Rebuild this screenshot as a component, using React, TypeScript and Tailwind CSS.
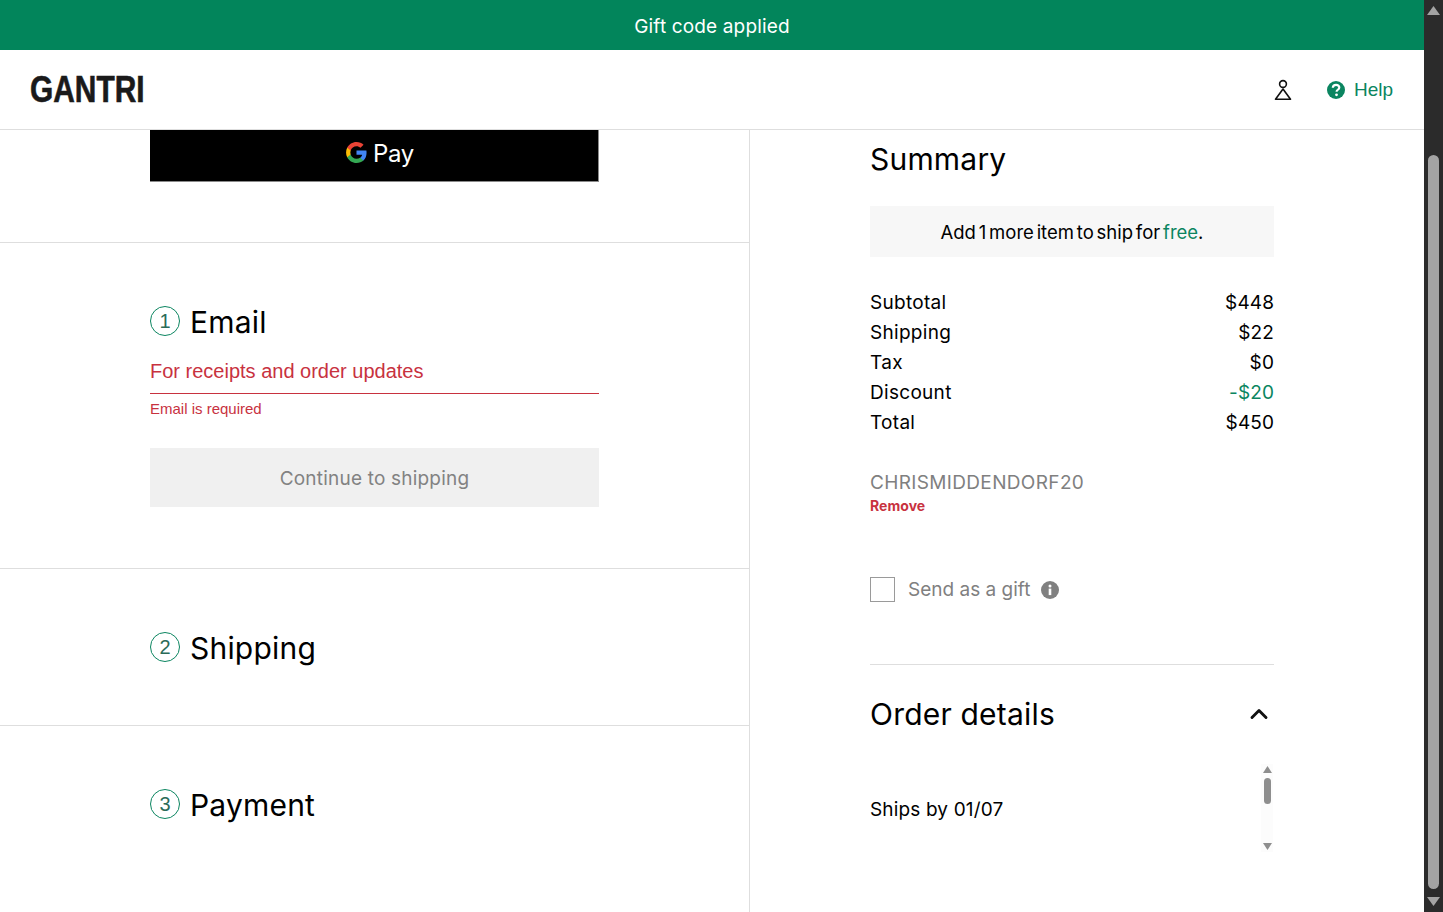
import { ChevronUp } from "lucide-react";

const FONT = "font-['Inter','Liberation_Sans',sans-serif]";

function Step({ n, label }: { n: number; label: string }) {
  return (
    <div className="flex items-center gap-[10px]">
      <span className="flex h-[30px] w-[30px] items-center justify-center rounded-full border border-[#0b8560] font-['Liberation_Sans',sans-serif] text-[20px] text-[#2b6b58]">
        {n}
      </span>
      <h2 className="h-[36px] pt-[2px] text-[30px] leading-[34px] tracking-[0.2px] text-black">{label}</h2>
    </div>
  );
}

function GoogleG() {
  return (
    <svg width="23" height="23" viewBox="0 0 48 48">
      <path fill="#4285F4" d="M45 24.5c0-1.6-.1-3.1-.4-4.5H24v8.6h11.8c-.5 2.8-2.1 5.1-4.4 6.7v5.6h7.1C42.7 37 45 31.3 45 24.5z" />
      <path fill="#34A853" d="M24 46c5.9 0 10.9-2 14.5-5.3l-7.1-5.6c-2 1.3-4.5 2.1-7.4 2.1-5.7 0-10.5-3.8-12.2-9H4.5v5.8C8.1 41 15.5 46 24 46z" />
      <path fill="#FBBC05" d="M11.8 28.2c-.9-2.6-.9-5.8 0-8.4V14H4.5c-3 6-3 14 0 20l7.3-5.8z" />
      <path fill="#EA4335" d="M24 10.8c3.2 0 6.1 1.1 8.4 3.3l6.3-6.3C34.9 4.2 29.9 2 24 2 15.5 2 8.1 7 4.5 14l7.3 5.8c1.7-5.2 6.5-9 12.2-9z" />
    </svg>
  );
}

function Row({ label, value, green }: { label: string; value: string; green?: boolean }) {
  return (
    <div className="flex h-[30px] items-center justify-between pt-[2px] text-[19px] text-black">
      <span className="tracking-[0.3px]">{label}</span>
      <span className={green ? "tracking-[0.1px] text-[#0b8560]" : "tracking-[0.1px]"}>{value}</span>
    </div>
  );
}

function Scrollbar() {
  return (
    <div className="flex h-full w-[19px] shrink-0 flex-col items-center bg-[#2b2b2b]">
      <svg width="13" height="10" viewBox="0 0 13 10" className="mt-[6px]">
        <path d="M6.5 0 13 9H0z" fill="#a3a3a3" />
      </svg>
      <div className="mt-[139px] h-[734px] w-[11px] rounded-full bg-[#a3a3a3]" />
      <svg width="13" height="10" viewBox="0 0 13 10" className="mt-[8px]">
        <path d="M0 0h13L6.500 9z" fill="#a3a3a3" />
      </svg>
    </div>
  );
}

export default function App() {
  return (
    <div className={`flex h-[912px] w-full overflow-hidden bg-white ${FONT}`}>
      <div className="flex min-w-0 flex-1 flex-col">
        <div className="flex h-[50px] shrink-0 items-center justify-center bg-[#02855b] pt-[4px] text-[19px] tracking-[0.15px] text-white">
          Gift code applied
        </div>
        <header className="flex h-[80px] shrink-0 items-center justify-between border-b border-[#dedede] pl-[30px] pr-[31px]">
          <div className="w-[114px] origin-left scale-x-[0.83] whitespace-nowrap font-['Liberation_Sans',sans-serif] text-[36px] font-bold leading-none text-[#1a1a1a] [-webkit-text-stroke:0.6px_#1a1a1a]">
            GANTRI
          </div>
          <div className="flex items-center gap-[35px]">
            <svg width="18" height="22" viewBox="0 0 18 22" fill="none" stroke="#111" strokeWidth="1.6">
              <circle cx="9" cy="5" r="3.4" />
              <path d="M9 10 16.500 20.300H1.500z" strokeLinejoin="round" />
            </svg>
            <div className="flex items-center gap-[9px] font-['Liberation_Sans',sans-serif] text-[19px] text-[#0b8560]">
              <svg width="18" height="18" viewBox="0 0 18 18">
                <circle cx="9" cy="9" r="9" fill="#0b8560" />
                <path d="M5.800 6.800c.1-1.900 1.500-2.900 3.300-2.900 1.900 0 3.200 1.100 3.200 2.600 0 1.100-.6 1.800-1.600 2.400-.9.500-1.100.9-1.100 1.800" fill="none" stroke="#fff" strokeWidth="2.200" />
                <circle cx="9.500" cy="13.800" r="1.400" fill="#fff" />
              </svg>
              <span className="pt-[2px]">Help</span>
            </div>
          </div>
        </header>
        <main className="flex min-h-0 flex-1">
          <section className="w-[750px] shrink-0 border-r border-[#dedede]">
            <div className="h-[113px] border-b border-[#dedede] pl-[150px]">
              <div className="flex h-[52px] w-[449px] items-center justify-center gap-[5px] border-b border-r border-[#8a8a8a] bg-black pb-[6px] pl-[11px] text-[24px] text-white">
                <GoogleG />
                <span className="pt-[2px] tracking-[-0.3px]">Pay</span>
              </div>
            </div>
            <div className="h-[326px] border-b border-[#dedede] pl-[150px] pr-[150px] pt-[60px]">
              <Step n={1} label="Email" />
              <div className="mt-[17px] h-[37px] font-['Liberation_Sans',sans-serif] text-[20px] leading-[30px] text-[#c8323f]">
                For receipts and order updates
              </div>
              <div className="h-px bg-[#c8323f]" />
              <p className="mt-[6px] font-['Liberation_Sans',sans-serif] text-[15px] leading-[18px] text-[#c8323f]">
                Email is required
              </p>
              <div className="mt-[30px] flex h-[59px] items-center justify-center bg-[#f0f0f0] pt-[4px] text-[19px] tracking-[0.2px] text-[#828282]">
                Continue to shipping
              </div>
            </div>
            <div className="h-[157px] border-b border-[#dedede] pl-[150px] pt-[60px]">
              <Step n={2} label="Shipping" />
            </div>
            <div className="pl-[150px] pt-[60px]">
              <Step n={3} label="Payment" />
            </div>
          </section>
          <aside className="ml-[120px] w-[404px] shrink-0">
            <h1 className="mt-[11px] text-[30px] leading-[36px] tracking-[0.2px] text-black">Summary</h1>
            <div className="mt-[29px] flex h-[51px] items-center justify-center bg-[#f7f7f7] pt-[2px] text-[18.500px] text-black [word-spacing:-2.400px]">
              <span>
                Add 1 more item to ship for <span className="text-[#0b8560]">free</span>.
              </span>
            </div>
            <div className="mt-[30px]">
              <Row label="Subtotal" value="$448" />
              <Row label="Shipping" value="$22" />
              <Row label="Tax" value="$0" />
              <Row label="Discount" value="-$20" green />
              <Row label="Total" value="$450" />
            </div>
            <div className="mt-[31px] text-[19px] leading-[30px] tracking-[0.35px] text-[#808080]">CHRISMIDDENDORF20</div>
            <div className="text-[14px] font-bold leading-[16px] tracking-[0.05px] text-[#c8323f]">Remove</div>
            <div className="mt-[63px] flex h-[25px] items-center text-[19px] text-[#808080]">
              <span className="h-[25px] w-[25px] border border-[#9a9a9a]" />
              <span className="ml-[13px] pt-[2px]">Send as a gift</span>
              <svg width="18" height="18" viewBox="0 0 18 18" className="ml-[11px] mt-[1px]">
                <circle cx="9" cy="9" r="9" fill="#808080" />
                <rect x="7.700" y="7.600" width="2.600" height="6.500" fill="#fff" />
                <circle cx="9" cy="5" r="1.500" fill="#fff" />
              </svg>
            </div>
            <div className="mt-[62px] flex h-[100px] items-center justify-between border-t border-[#dedede] pr-[1px]">
              <h2 className="h-[36px] text-[30px] leading-[34px] tracking-[0.2px] text-black">Order details</h2>
              <ChevronUp size={28} strokeWidth={2.500} className="mb-[2px] text-[#111]" />
            </div>
            <div className="relative h-[90px]">
              <p className="pt-[33px] text-[19px] leading-[26px] tracking-[0.15px] text-black">Ships by 01/07</p>
              <div className="absolute right-[1px] top-0 flex h-[88px] w-[12px] flex-col items-center bg-[#fcfcfc]">
                <svg width="9" height="7" viewBox="0 0 9 7" className="mt-[2px]">
                  <path d="M4.500 0 9 7H0z" fill="#8e8e8e" />
                </svg>
                <div className="mt-[5px] h-[26px] w-[7px] rounded-full bg-[#8e8e8e]" />
                <svg width="9" height="7" viewBox="0 0 9 7" className="mt-[39px]">
                  <path d="M0 0h9L4.500 7z" fill="#8e8e8e" />
                </svg>
              </div>
            </div>
          </aside>
        </main>
      </div>
      <Scrollbar />
    </div>
  );
}
